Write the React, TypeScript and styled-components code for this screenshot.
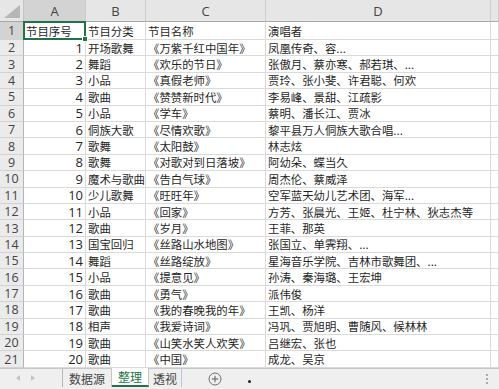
import React from "react";
import styled, { createGlobalStyle, css } from "styled-components";

const Global = createGlobalStyle`
  html, body { margin: 0; padding: 0; background: #ffffff; }
  body { width: 499px; height: 389px; overflow: hidden; font-family: "Noto Sans CJK SC", "Noto Sans", sans-serif; }
`;

const Page = styled.div`
  width: 499px;
  height: 389px;
  display: flex;
  flex-direction: column;
  overflow: hidden;
`;

const Sheet = styled.div`
  display: grid;
  grid-template-columns: 24px 62px 60px 120px 225px 1fr;
  grid-template-rows: 22px 18px repeat(20, 16.4px);
  flex: none;
  height: 368px;
`;

const Corner = styled.div`
  background: #e6e6e6;
  border-right: 1px solid #c4c4c4;
  border-bottom: 1px solid #a8a8a8;
  box-sizing: border-box;
  display: flex;
  align-items: flex-end;
  justify-content: flex-end;
  padding: 0 3px 3px 0;
`;

const ColHeader = styled.div<{ $selected?: boolean }>`
  background: ${(p) => (p.$selected ? "#d3d3d3" : "#e6e6e6")};
  border-right: 1px solid #cdcdcd;
  border-bottom: 1px solid #a8a8a8;
  box-sizing: border-box;
  display: flex;
  align-items: center;
  justify-content: center;
  font-family: "Open Sans", "Liberation Sans", sans-serif;
  font-size: 13px;
  color: #444;
  padding-top: 1px;
`;

const RowHeader = styled.div<{ $selected?: boolean }>`
  background: ${(p) => (p.$selected ? "#d3d3d3" : "#ebebeb")};
  border-right: 1px solid #b4b4b4;
  border-bottom: 1px solid #d2d2d2;
  box-sizing: border-box;
  display: flex;
  align-items: center;
  justify-content: center;
  font-family: "Open Sans", "Liberation Sans", sans-serif;
  font-size: 12.5px;
  color: #444;
`;

const Cell = styled.div<{ $num?: boolean; $selected?: boolean }>`
  position: relative;
  background: #fff;
  border-right: 1px solid #dadada;
  border-bottom: 1px solid #dadada;
  box-sizing: border-box;
  display: flex;
  align-items: center;
  justify-content: ${(p) => (p.$num ? "flex-end" : "flex-start")};
  padding: 0 ${(p) => (p.$num ? "2px" : "0")} 0 2px;
  white-space: nowrap;
  overflow: visible;
  color: #1f1f1f;
  font-size: ${(p) => (p.$num ? "13px" : "11.4px")};
  font-family: ${(p) =>
    p.$num
      ? `"Open Sans", "Liberation Sans", sans-serif`
      : `"Noto Sans CJK SC", "Noto Sans", sans-serif`};
  ${(p) =>
    p.$selected &&
    css`
      &::after {
        content: "";
        position: absolute;
        left: -1px;
        top: -1px;
        right: -1px;
        bottom: -1px;
        border: 2px solid #217346;
        pointer-events: none;
      }
      &::before {
        content: "";
        position: absolute;
        right: -3px;
        bottom: -3px;
        width: 4px;
        height: 4px;
        background: #217346;
        border: 1px solid #fff;
        z-index: 2;
      }
    `}
`;

const TabBar = styled.div`
  flex: 1;
  display: flex;
  align-items: flex-start;
  background: #efefef;
  border-top: 1px solid #c8c8c8;
  box-sizing: border-box;
`;

const NavArea = styled.div`
  width: 63px;
  height: 18px;
  display: flex;
  align-items: center;
  justify-content: flex-start;
  gap: 11px;
  padding-left: 16px;
  box-sizing: border-box;
  border-right: 1px solid #b8b8b8;
`;

const Arrow = styled.div<{ $dir: "left" | "right" }>`
  width: 0;
  height: 0;
  border-top: 3px solid transparent;
  border-bottom: 3px solid transparent;
  ${(p) =>
    p.$dir === "left"
      ? css`border-right: 4px solid #c4c4c4;`
      : css`border-left: 4px solid #c4c4c4;`}
`;

const Tab = styled.div<{ $active?: boolean; $w: number }>`
  width: ${(p) => p.$w}px;
  height: 18px;
  box-sizing: border-box;
  display: flex;
  align-items: center;
  justify-content: center;
  font-size: 12px;
  font-family: "Noto Sans CJK SC", "Noto Sans", sans-serif;
  border-right: 1px solid #c4c4c4;
  color: ${(p) => (p.$active ? "#217346" : "#444")};
  background: ${(p) => (p.$active ? "#ffffff" : "transparent")};
  border-bottom: ${(p) => (p.$active ? "2px solid #217346" : "none")};
  margin-top: ${(p) => (p.$active ? "-1px" : "0")};
  height: ${(p) => (p.$active ? "19px" : "18px")};
`;

const AddButton = styled.div`
  margin-left: 26px;
  height: 20px;
  display: flex;
  align-items: center;
`;

const Dot = styled.div`
  width: 3px;
  height: 3px;
  border-radius: 50%;
  background: #222;
  margin-left: 26px;
  margin-top: 11px;
`;

const Spacer = styled.div`
  flex: 1;
`;

const Splitter = styled.div`
  width: 3px;
  height: 20px;
  display: flex;
  flex-direction: column;
  justify-content: center;
  gap: 2px;
  margin-right: 10px;
  span {
    display: block;
    width: 2px;
    height: 2px;
    background: #aaa;
  }
`;

const rows: [string, string, string, string, string][] = [
  ["节目序号", "节目分类", "节目名称", "演唱者", ""],
  ["1", "开场歌舞", "《万紫千红中国年》", "凤凰传奇、容...", ""],
  ["2", "舞蹈", "《欢乐的节日》", "张傲月、蔡亦寒、郝若琪、...", ""],
  ["3", "小品", "《真假老师》", "贾玲、张小斐、许君聪、何欢", ""],
  ["4", "歌曲", "《赞赞新时代》", "李易峰、景甜、江疏影", ""],
  ["5", "小品", "《学车》", "蔡明、潘长江、贾冰", ""],
  ["6", "侗族大歌", "《尽情欢歌》", "黎平县万人侗族大歌合唱...", ""],
  ["7", "歌舞", "《太阳鼓》", "林志炫", ""],
  ["8", "歌舞", "《对歌对到日落坡》", "阿幼朵、蝶当久", ""],
  ["9", "魔术与歌曲", "《告白气球》", "周杰伦、蔡威泽", ""],
  ["10", "少儿歌舞", "《旺旺年》", "空军蓝天幼儿艺术团、海军...", ""],
  ["11", "小品", "《回家》", "方芳、张晨光、王姬、杜宁林、狄志杰等", ""],
  ["12", "歌曲", "《岁月》", "王菲、那英", ""],
  ["13", "国宝回归", "《丝路山水地图》", "张国立、单霁翔、...", ""],
  ["14", "舞蹈", "《丝路绽放》", "星海音乐学院、吉林市歌舞团、...", ""],
  ["15", "小品", "《提意见》", "孙涛、秦海璐、王宏坤", ""],
  ["16", "歌曲", "《勇气》", "派伟俊", ""],
  ["17", "歌曲", "《我的春晚我的年》", "王凯、杨洋", ""],
  ["18", "相声", "《我爱诗词》", "冯巩、贾旭明、曹随风、候林林", ""],
  ["19", "歌曲", "《山笑水笑人欢笑》", "吕继宏、张也", ""],
  ["20", "歌曲", "《中国》", "成龙、吴京", ""],
];

const cols = ["A", "B", "C", "D", ""];

export default function App() {
  return (
    <Page>
      <Global />
      <Sheet>
        <Corner>
          <svg width="16" height="13" viewBox="0 0 16 13">
            <polygon points="16,0 16,13 0,13" fill="#b6b6b6" />
          </svg>
        </Corner>
        {cols.map((c, i) => (
          <ColHeader key={"h" + i} $selected={i === 0}>
            {c}
          </ColHeader>
        ))}
        {rows.map((r, ri) => (
          <React.Fragment key={"r" + ri}>
            <RowHeader $selected={ri === 0}>{ri + 1}</RowHeader>
            {r.map((v, ci) => (
              <Cell
                key={ci}
                $num={ci === 0 && ri > 0}
                $selected={ci === 0 && ri === 0}
              >
                {v}
              </Cell>
            ))}
          </React.Fragment>
        ))}
      </Sheet>
      <TabBar>
        <NavArea>
          <Arrow $dir="left" />
          <Arrow $dir="right" />
        </NavArea>
        <Tab $w={49}>数据源</Tab>
        <Tab $w={37} $active>
          整理
        </Tab>
        <Tab $w={33}>透视</Tab>
        <AddButton>
          <svg width="14" height="14" viewBox="0 0 14 14">
            <circle cx="7" cy="7" r="6" fill="none" stroke="#6f6f6f" strokeWidth="1" />
            <line x1="7" y1="3.8" x2="7" y2="10.2" stroke="#6f6f6f" strokeWidth="1.2" />
            <line x1="3.8" y1="7" x2="10.2" y2="7" stroke="#6f6f6f" strokeWidth="1.2" />
          </svg>
        </AddButton>
        <Dot />
        <Spacer />
        <Splitter>
          <span />
          <span />
          <span />
        </Splitter>
      </TabBar>
    </Page>
  );
}
